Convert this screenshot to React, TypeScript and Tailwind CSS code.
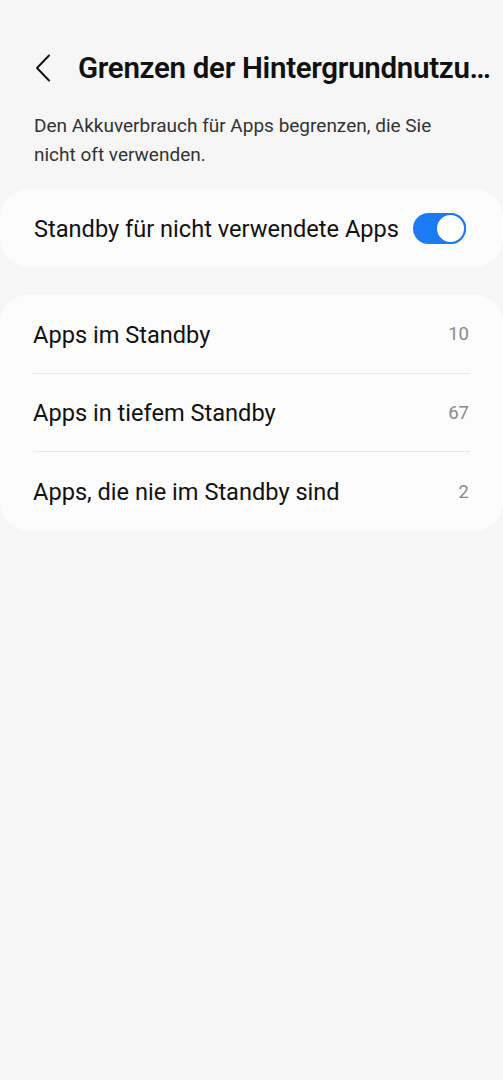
import React from "react";

const rows = [
  { label: "Apps im Standby", value: "10" },
  { label: "Apps in tiefem Standby", value: "67" },
  { label: "Apps, die nie im Standby sind", value: "2" },
];

export default function App() {
  return (
    <div
      className="min-h-[1080px] w-full bg-[#f6f6f6] pt-[34px] text-[#111]"
      style={{ fontFamily: "Roboto, 'Noto Sans', sans-serif" }}
    >
      <div className="flex h-[68px] items-center pl-[34px] pr-[10px]">
        <svg width="18" height="28" viewBox="0 0 18 28" className="shrink-0">
          <path d="M15 1.5 L3 14 L15 26.5" fill="none" stroke="#111" strokeWidth="1.9" strokeLinecap="round" strokeLinejoin="round" />
        </svg>
        <div className="ml-[26px] min-w-0 truncate text-[29.5px] font-semibold tracking-[-0.3px]">
          Grenzen der Hintergrundnutzung für Apps
        </div>
      </div>

      <p className="px-[34px] pr-[30px] pt-[9px] text-[19px] leading-[29px] text-[#333]">
        Den Akkuverbrauch für Apps begrenzen, die Sie nicht oft verwenden.
      </p>

      <div className="mt-[20px] flex h-[78px] items-center justify-between rounded-[28px] bg-[#fcfcfc] pl-[34px] pr-[37px]">
        <span className="pt-[3px] text-[23.6px]">Standby für nicht verwendete Apps</span>
        <div className="relative h-[31px] w-[53px] rounded-full bg-[#1a7bf3]">
          <div className="absolute right-0 top-0 h-[31px] w-[31px] rounded-full border-[2px] border-[#1a7bf3] bg-white" />
        </div>
      </div>

      <div className="mt-[28px] rounded-[28px] bg-[#fcfcfc] px-[33px]">
        {rows.map((r, i) => (
          <div
            key={r.label}
            className={`flex h-[78.5px] items-center justify-between pt-[3px] ${i < rows.length - 1 ? "border-b border-[#e8e8e8]" : ""}`}
          >
            <span className="text-[23.6px]">{r.label}</span>
            <span className="pr-[1px] text-[18.5px] text-[#8a8a8a]">{r.value}</span>
          </div>
        ))}
      </div>
    </div>
  );
}
